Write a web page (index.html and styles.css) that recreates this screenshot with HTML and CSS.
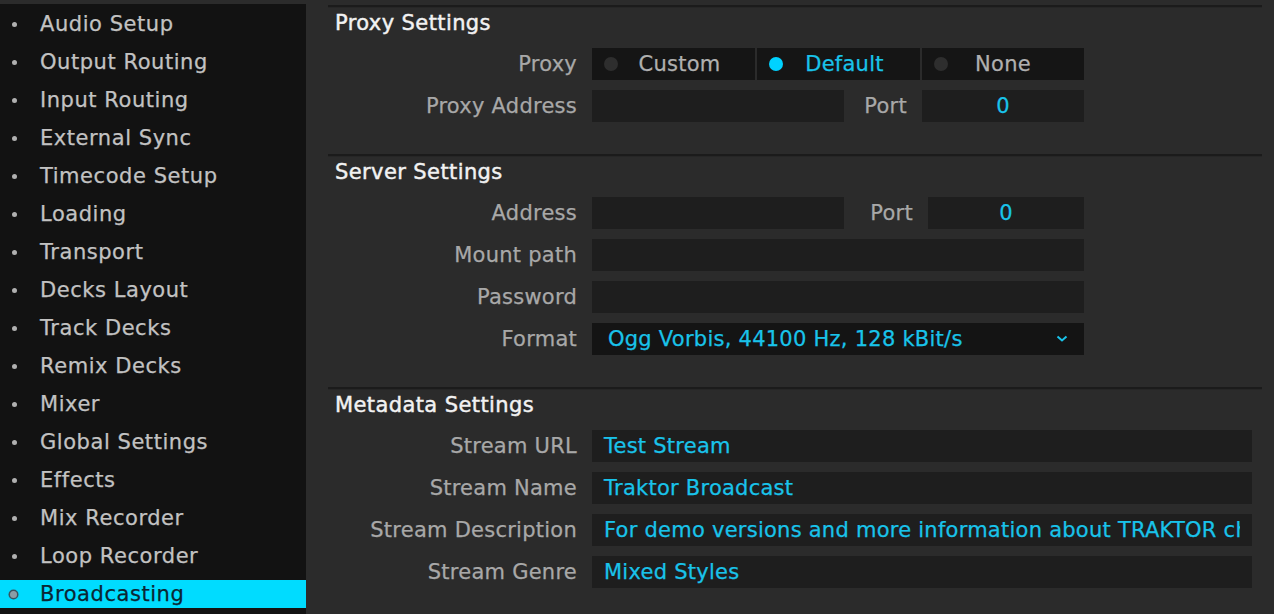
FILE: index.html
```html
<!DOCTYPE html>
<html>
<head>
<meta charset="utf-8">
<link rel="stylesheet" href="styles.css">
</head>
<body>
<div class="app">
  <nav class="sidebar">
    <div class="item"><span class="bullet"></span><span>Audio Setup</span></div>
    <div class="item"><span class="bullet"></span><span>Output Routing</span></div>
    <div class="item"><span class="bullet"></span><span>Input Routing</span></div>
    <div class="item"><span class="bullet"></span><span>External Sync</span></div>
    <div class="item"><span class="bullet"></span><span>Timecode Setup</span></div>
    <div class="item"><span class="bullet"></span><span>Loading</span></div>
    <div class="item"><span class="bullet"></span><span>Transport</span></div>
    <div class="item"><span class="bullet"></span><span>Decks Layout</span></div>
    <div class="item"><span class="bullet"></span><span>Track Decks</span></div>
    <div class="item"><span class="bullet"></span><span>Remix Decks</span></div>
    <div class="item"><span class="bullet"></span><span>Mixer</span></div>
    <div class="item"><span class="bullet"></span><span>Global Settings</span></div>
    <div class="item"><span class="bullet"></span><span>Effects</span></div>
    <div class="item"><span class="bullet"></span><span>Mix Recorder</span></div>
    <div class="item"><span class="bullet"></span><span>Loop Recorder</span></div>
    <div class="item active"><span class="bullet"></span><span>Broadcasting</span></div>
  </nav>
  <main class="content">
    <section class="section first">
      <h2 class="section-title">Proxy Settings</h2>
      <div class="rows">
        <div class="row">
          <label class="label">Proxy</label>
          <div class="segments">
            <div class="seg w163"><span class="dot"></span><span class="seg-text">Custom</span></div>
            <div class="seg w163 on"><span class="dot"></span><span class="seg-text">Default</span></div>
            <div class="seg w162 last"><span class="dot"></span><span class="seg-text">None</span></div>
          </div>
        </div>
        <div class="row">
          <label class="label">Proxy Address</label>
          <div class="field w252"></div>
          <label class="sublabel">Port</label>
          <div class="field w162 center">0</div>
        </div>
      </div>
    </section>
    <section class="section">
      <h2 class="section-title">Server Settings</h2>
      <div class="rows">
        <div class="row">
          <label class="label">Address</label>
          <div class="field w252"></div>
          <label class="sublabel wide">Port</label>
          <div class="field w156 center">0</div>
        </div>
        <div class="row">
          <label class="label">Mount path</label>
          <div class="field w492"></div>
        </div>
        <div class="row">
          <label class="label">Password</label>
          <div class="field w492"></div>
        </div>
        <div class="row">
          <label class="label">Format</label>
          <div class="select w492">
            <span>Ogg Vorbis, 44100 Hz, 128 kBit/s</span>
            <svg class="chev" width="12" height="8" viewBox="0 0 12 8"><polyline points="1.5,1.5 6,5.5 10.5,1.5" fill="none" stroke="#19c3ea" stroke-width="2"/></svg>
          </div>
        </div>
      </div>
    </section>
    <section class="section">
      <h2 class="section-title">Metadata Settings</h2>
      <div class="rows">
        <div class="row">
          <label class="label">Stream URL</label>
          <div class="field w660">Test Stream</div>
        </div>
        <div class="row">
          <label class="label">Stream Name</label>
          <div class="field w660">Traktor Broadcast</div>
        </div>
        <div class="row">
          <label class="label">Stream Description</label>
          <div class="field w660"><span class="clip">For demo versions and more information about TRAKTOR check www.native-instruments.com</span></div>
        </div>
        <div class="row">
          <label class="label">Stream Genre</label>
          <div class="field w660">Mixed Styles</div>
        </div>
      </div>
    </section>
  </main>
</div>
</body>
</html>
```
FILE: styles.css
```css
html, body {
  margin: 0;
  padding: 0;
}
body {
  width: 1274px;
  height: 614px;
  overflow: hidden;
  background: #2b2b2b;
  font-family: "DejaVu Sans", Verdana, sans-serif;
  font-size: 21px;
  letter-spacing: 0.25px;
  -webkit-text-stroke: 0.25px currentColor;
}
.app {
  display: flex;
  height: 614px;
}
.sidebar {
  width: 306px;
  margin-top: 4px;
  padding-top: 6px;
  background: #121212;
  box-sizing: border-box;
  display: flex;
  flex-direction: column;
  gap: 10px;
}
.item {
  height: 28px;
  display: flex;
  align-items: center;
  color: #c2c2c2;
  line-height: 32px;
  letter-spacing: 0.55px;
}
.bullet {
  width: 5px;
  height: 5px;
  border-radius: 50%;
  background: #b0b0b0;
  margin-left: 12px;
  margin-right: 23px;
  flex: none;
}
.item.active {
  background: #00dcff;
  color: #0b2633;
}
.item.active .bullet {
  width: 7px;
  height: 7px;
  margin-left: 10px;
  margin-right: 23px;
  background: #8a9ea6;
  box-shadow: 0 0 0 1.5px #3a5560;
}
.content {
  flex: 1;
  padding: 0 12px 0 22px;
}
.section {
  border-top: 2px solid #1b1b1b;
  box-shadow: inset 0 1px 0 #262626;
  padding-bottom: 32px;
}
.section.first {
  margin-top: 5px;
}
.section-title {
  margin: 0;
  height: 29px;
  line-height: 33px;
  padding-left: 7px;
  font-size: 21px;
  font-weight: normal;
  letter-spacing: 0.4px;
  color: #f2f2f2;
  -webkit-text-stroke: 0.45px #f2f2f2;
}
.rows {
  margin-top: 12px;
  display: flex;
  flex-direction: column;
  gap: 10px;
}
.row {
  display: flex;
  height: 32px;
  align-items: center;
}
.label {
  width: 249px;
  margin-right: 15px;
  text-align: right;
  color: #a8a8a8;
  flex: none;
}
.sublabel {
  width: 63px;
  margin-right: 15px;
  text-align: right;
  color: #a8a8a8;
  flex: none;
}
.sublabel.wide {
  width: 69px;
}
.field {
  height: 32px;
  line-height: 32px;
  background: #1e1e1e;
  color: #19c3ea;
  padding: 0 12px;
  box-sizing: border-box;
  white-space: nowrap;
  overflow: hidden;
  flex: none;
}
.field .clip {
  display: block;
  width: 636px;
  overflow: hidden;
  white-space: nowrap;
}
.field.center {
  text-align: center;
}
.w156 { width: 156px; }
.w162 { width: 162px; }
.w163 { width: 163px; }
.w252 { width: 252px; }
.w492 { width: 492px; }
.w660 { width: 660px; }
.segments {
  display: flex;
  gap: 2px;
}
.seg {
  height: 32px;
  background: #151515;
  display: flex;
  align-items: center;
  position: relative;
  color: #b0b0b0;
  box-sizing: border-box;
}
.seg .dot {
  position: absolute;
  left: 12px;
  top: 9px;
  width: 14px;
  height: 14px;
  border-radius: 50%;
  background: #2e2e2e;
}
.seg-text {
  flex: 1;
  text-align: center;
  padding-left: 12px;
}
.seg.last .seg-text {
  padding-left: 0;
}
.seg.on {
  color: #19c3ea;
}
.seg.on .dot {
  background: #00d2ff;
}
.select {
  height: 32px;
  background: #141414;
  color: #19c3ea;
  display: flex;
  align-items: center;
  justify-content: space-between;
  padding: 0 12px 0 16px;
  box-sizing: border-box;
  flex: none;
}
.chev {
  display: block;
  margin-right: 4px;
}
```
